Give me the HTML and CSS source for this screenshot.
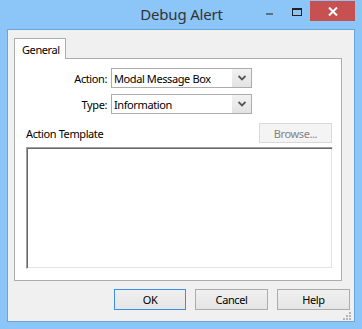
FILE: index.html
```html
<!DOCTYPE html>
<html>
<head>
<meta name="viewport" content="width=device-width, initial-scale=1">
<link rel="stylesheet" href="styles.css">
</head>
<body>

<div class="window">
    <!-- Title bar -->
    <div class="titlebar">
        <div class="title">Debug Alert</div>
        <div class="caption-btns">
            <span class="cap-min"></span>
            <span class="cap-max"></span>
            <span class="cap-close">
                <svg width="10" height="9" viewBox="0 0 10 9">
                    <path d="M1 0.5 L9 8.5 M9 0.5 L1 8.5" stroke="#fff" stroke-width="2"/>
                </svg>
            </span>
        </div>
    </div>

    <!-- Client area -->
    <div class="client">
        <div class="tabs">
            <div class="tab active">General</div>
        </div>

        <div class="panel">
            <div class="fields">
                <label>Action:</label>
                <div class="combo">
                    <span class="combo-text">Modal Message Box</span>
                    <span class="combo-btn">
                        <svg width="8" height="6" viewBox="0 0 8 6"><path d="M0.5 1 L4 4.5 L7.5 1" fill="none" stroke="#555" stroke-width="1.8"/></svg>
                    </span>
                </div>
                <label>Type:</label>
                <div class="combo">
                    <span class="combo-text">Information</span>
                    <span class="combo-btn">
                        <svg width="8" height="6" viewBox="0 0 8 6"><path d="M0.5 1 L4 4.5 L7.5 1" fill="none" stroke="#555" stroke-width="1.8"/></svg>
                    </span>
                </div>
            </div>

            <div class="template">
                <div class="template-head">
                    <span>Action Template</span>
                    <button class="btn btn-disabled">Browse...</button>
                </div>
                <div class="template-box"></div>
            </div>
        </div>

        <div class="dialog-buttons">
            <button class="btn btn-default">OK</button>
            <button class="btn">Cancel</button>
            <button class="btn">Help</button>
        </div>

        <div class="grip">
            <svg width="9" height="9" viewBox="0 0 9 9" fill="#b5b5b5">
                <rect x="6" y="0" width="2" height="2"/>
                <rect x="3" y="3" width="2" height="2"/>
                <rect x="6" y="3" width="2" height="2"/>
                <rect x="0" y="6" width="2" height="2"/>
                <rect x="3" y="6" width="2" height="2"/>
                <rect x="6" y="6" width="2" height="2"/>
            </svg>
        </div>
    </div>
</div>

</body>
</html>
```

FILE: styles.css
```css
* {
    box-sizing: border-box;
    margin: 0;
    padding: 0;
}

body {
    font-family: 'Noto Sans', 'Liberation Sans', sans-serif;
    font-size: 11px;
    letter-spacing: -0.4px;
    color: #000;
    background: #8cc5f7;
}

.window {
    width: 362px;
    height: 329px;
    background: #8cc5f7;
    padding: 0 7px 7px 7px;
}

.titlebar {
    height: 29px;
    position: relative;
    display: flex;
    align-items: center;
    justify-content: center;
}

.title {
    font-size: 15px;
    letter-spacing: -0.2px;
    color: #333;
    margin-top: -1px;
    margin-left: 1px;
}

.caption-btns {
    position: absolute;
    top: 1px;
    right: 0;
    display: flex;
    align-items: flex-start;
}

.cap-min {
    width: 7px;
    height: 2px;
    background: #56708a;
    margin-top: 12px;
    margin-right: 19px;
}

.cap-max {
    width: 10px;
    height: 8px;
    border: 1px solid #222;
    border-top-width: 2px;
    margin-top: 7px;
    margin-right: 8px;
}

.cap-close {
    width: 45px;
    height: 20px;
    background: #c75050;
    display: flex;
    align-items: center;
    justify-content: center;
}

.client {
    position: relative;
    height: 293px;
    border: 1px solid #6aa4d9;
    background: #f0f0f0;
    padding: 8px 0 0 6px;
}

.tabs {
    display: flex;
    height: 20px;
}

.tab {
    width: 52px;
    height: 21px;
    border: 1px solid #acacac;
    border-bottom: none;
    background: #fff;
    padding: 3px 0 0 7px;
    position: relative;
    z-index: 1;
}

.panel {
    width: 328px;
    height: 223px;
    border: 1px solid #acacac;
    background: #fff;
}

.fields {
    display: grid;
    grid-template-columns: 92px 141px;
    column-gap: 4px;
    row-gap: 6px;
    padding-top: 9px;
    align-items: center;
}

.fields label {
    text-align: right;
}

.combo {
    display: flex;
    height: 20px;
    border: 1px solid #acacac;
    background: #fff;
}

.combo-text {
    flex: 1;
    padding: 2px 0 0 2px;
}

.combo-btn {
    width: 19px;
    background: linear-gradient(#f2f2f2, #e3e3e3);
    display: flex;
    align-items: center;
    justify-content: center;
}

.template {
    padding: 9px 8px 0 11px;
}

.template-head {
    display: flex;
    justify-content: space-between;
    align-items: center;
    height: 20px;
    margin-right: 1px;
}

.template-box {
    margin-top: 4px;
    height: 122px;
    border-top: 1px solid #a0a0a0;
    border-left: 1px solid #a0a0a0;
    border-right: 1px solid #fff;
    border-bottom: 1px solid #fff;
    box-shadow: inset 1px 1px #696969, inset -1px -1px #e3e3e3;
    background: #fff;
}

.btn {
    font-family: 'Noto Sans', 'Liberation Sans', sans-serif;
    font-size: 11px;
    letter-spacing: -0.4px;
    color: #000;
    width: 73px;
    height: 21px;
    border: 1px solid #acacac;
    background: linear-gradient(#f0f0f0, #e5e5e5);
}

.btn-default {
    border-color: #3c8ee6;
    width: 72px;
}

.btn-disabled {
    height: 20px;
    border-color: #d9d9d9;
    background: #f4f4f4;
    color: #838383;
}

.dialog-buttons {
    display: flex;
    gap: 9px;
    justify-content: flex-end;
    margin-top: 8px;
    margin-right: 4px;
}

.grip {
    position: absolute;
    right: 2px;
    bottom: 0;
    line-height: 0;
}
```
